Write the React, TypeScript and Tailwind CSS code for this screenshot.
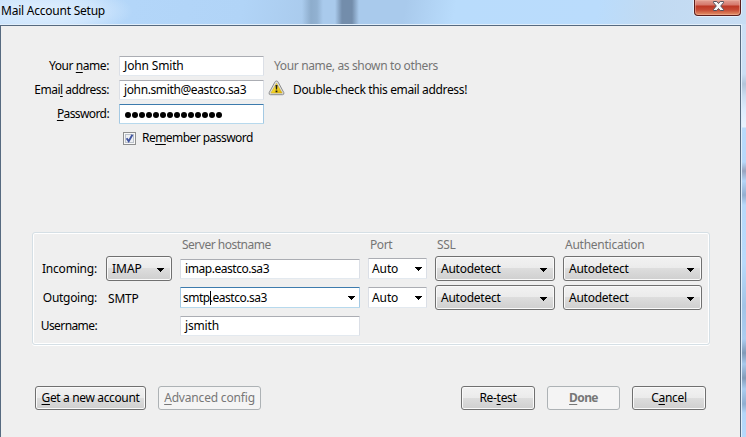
import type { ReactNode } from "react";

function Arrow({ className = "" }: { className?: string }) {
  return (
    <svg className={`shrink-0 ${className}`} width="7" height="4" viewBox="0 0 7 4" shapeRendering="crispEdges">
      <path d="M0 0h7v1H0zM1 1h5v1H1zM2 2h3v1H2zM3 3h1v1H3z" fill="#000" />
    </svg>
  );
}

function Field({ focused = false, className = "", children }: { focused?: boolean; className?: string; children: ReactNode }) {
  const border = focused
    ? "border-t-[#3d7bad] border-x-[#a4c9e3] border-b-[#b7d9ed]"
    : "border-t-[#abadb3] border-x-[#dbdfe6] border-b-[#e3e9ef]";
  return <div className={`flex items-center rounded-[1px] border bg-white ${border} ${className}`}>{children}</div>;
}

function Button({ disabled = false, className = "", children }: { disabled?: boolean; className?: string; children: ReactNode }) {
  const look = disabled
    ? "border-[#adb2b5] bg-[#f4f4f4] text-[#777]"
    : "border-[#707070] bg-[linear-gradient(#f2f2f2_0%,#ebebeb_48%,#dddddd_50%,#cfcfcf_100%)] text-black shadow-[inset_0_0_0_1px_#fafafa]";
  return <div className={`flex items-center rounded-[3px] border ${look} ${className}`}>{children}</div>;
}

function Select({ children }: { children: ReactNode }) {
  return (
    <Button className="h-[25px] justify-between pr-[7px] pl-[5px]">
      {children}
      <Arrow className="mt-[3px]" />
    </Button>
  );
}

function PortBox({ className = "" }: { className?: string }) {
  return (
    <Field className={`h-[21px] justify-between pr-[4px] pl-[3px] ${className}`}>
      <span className="tracking-[-0.1px]">Auto</span>
      <Arrow className="mt-px" />
    </Field>
  );
}

const Key = ({ children }: { children: ReactNode }) => (
  <span className="underline decoration-1 underline-offset-2">{children}</span>
);

function Warning() {
  return (
    <svg className="shrink-0" width="17" height="16" viewBox="0 0 17 16">
      <defs>
        <linearGradient id="warn" x1="0" y1="0" x2="1" y2="1">
          <stop offset="0" stopColor="#fff27a" />
          <stop offset=".55" stopColor="#f2d21f" />
          <stop offset="1" stopColor="#d9a900" />
        </linearGradient>
      </defs>
      <path d="M8.500 1Q9.600 1 10.200 2.200L15.800 12.600Q16.400 14.600 14.600 14.700H2.400Q.6 14.600 1.200 12.600L6.800 2.200Q7.400 1 8.500 1Z" fill="#dedede" stroke="#8c8c8c" />
      <path d="M8.500 3.300L14.200 13.100H2.800Z" fill="url(#warn)" stroke="#c8a92a" strokeWidth=".5" />
      <path d="M7.500 5h2l-.4 4.600H7.900zM7.600 10.600h1.800v1.700H7.600z" fill="#1c1c1c" />
    </svg>
  );
}

export default function App() {
  return (
    <div className="flex h-[437px] w-[746px] flex-col overflow-hidden bg-[#efefef] font-['Noto_Sans',sans-serif] text-[12px] leading-4 whitespace-nowrap text-black">
      <header className="flex h-6 shrink-0 justify-between bg-[radial-gradient(ellipse_85px_24px_at_48px_11px,#e4f2ffdd_0%,#e0efff88_60%,transparent_100%),linear-gradient(90deg,transparent_302px,#86a5c4cc_311px,#86a5c4aa_317px,transparent_323px,transparent_335px,#738dab_342px,#738dab_352px,transparent_359px),linear-gradient(100deg,#c4e0fb_0px,#b3d6f9_130px,#b1d4f7_240px,#a9caec_310px,#a9caec_400px,#b9dcfc_450px,#badcfc_590px,#c1daf2_640px,#c8ddf3_746px)]">
        <h1 className="pt-[3px] pl-[1px] tracking-[-0.23px]">Mail Account Setup</h1>
        <div className="mr-[5px] flex h-4 w-[47px] justify-center rounded-b-[4px] border border-t-0 border-[#5a1d1c] bg-[linear-gradient(#e2a094_0px,#d5776a_5px,#bc3724_6px,#c74b35_10px,#e39469_15px)] pt-[1px] pl-[2px] shadow-[inset_0_0_0_1px_#f1b5a580,0_0_0_1px_#e4effa]">
          <svg width="13" height="11" viewBox="0 0 13 11">
            <path d="M1.500 .5H4.800L6.500 2.500 8.200 .5h3.300v1.200L8.700 5l2.800 3.300v1.200H8.200L6.500 7.500 4.800 9.500H1.500v-1.200L4.300 5 1.500 1.700Z" fill="#f6f6f6" stroke="#56525c" strokeLinejoin="round" />
          </svg>
        </div>
      </header>
      <div className="flex flex-1 bg-[linear-gradient(#cde0f5_0px,#cbdff4_50px,#b2c5da_60px,#cbddf0_72px,#dcecfd_86px,#e9f3fe_103px,#b9dbfc_104px,#b7d8f9_138px,#98a4bf_147px,#b4d5f7_157px,#93afd0_171px,#b7d9fa_181px,#b8dafb_240px,#a2c4e6_282px,#abcdf0_315px,#809ab7_329px,#a7c9ec_340px,#829cb9_354px,#aacdf0_365px,#8faed0_380px,#b3d6f8_389px,#b6d9fb_413px)]">
        <main className="flex w-[742px] flex-col border-t border-r border-[#e2effb]">
          <div className="flex flex-1 flex-col border-x border-t border-[#566a80] bg-[#efefef]">
            <section className="mt-[30px] grid grid-cols-[108px_145px_1fr] grid-rows-[repeat(4,20px)] items-center gap-x-[10px] gap-y-1">
              <div className="text-right tracking-[-0.43px]">Your <Key>n</Key>ame:</div>
              <Field className="h-5 pl-[4px] tracking-[-0.15px]">John Smith</Field>
              <div className="tracking-[-0.36px] text-[#757575]">Your name, as shown to others</div>

              <div className="text-right tracking-[-0.5px]">Emai<Key>l</Key> address:</div>
              <Field className="h-5 pl-[4px] tracking-[-0.38px]">john.smith@eastco.sa3</Field>
              <div className="-ml-[6px] flex items-center gap-[8px] tracking-[-0.35px]">
                <div className="-mt-[5px]"><Warning /></div>
                Double-check this email address!
              </div>

              <div className="text-right tracking-[-0.6px]"><Key>P</Key>assword:</div>
              <Field focused className="h-5 gap-[1px] pl-[5px]">
                {Array.from({ length: 14 }, (_, i) => (
                  <span key={i} className="mt-[2px] size-[6px] rounded-full bg-black" />
                ))}
              </Field>
              <div />

              <div className="col-start-2 flex items-center gap-[6px] pl-[4px] tracking-[-0.55px]">
                <div className="flex size-[13px] shrink-0 items-center justify-center border border-[#8e8f8f] bg-[#eef0f3] shadow-[inset_0_0_0_1px_#f8f8f8,inset_0_0_0_2px_#bcc2cb]">
                  <svg width="11" height="11" viewBox="0 0 11 11">
                    <path d="M2.600 5.200L4.700 8.300L8.400 1.800" fill="none" stroke="#4155a0" strokeWidth="1.900" />
                  </svg>
                </div>
                <span>Re<Key>m</Key>ember password</span>
              </div>
            </section>

            <section className="mt-[84px] ml-[31px] h-[113px] w-[678px] rounded-[3px] border border-[#d5dfe5] shadow-[inset_0_0_0_1px_#fff,0_1px_0_#fff]">
              <div className="mt-[3px] grid grid-cols-[64px_66px_180px_59px_120px_139px] grid-rows-[16px_25px_25px_20px] items-start gap-x-2 gap-y-1 pl-px">
                <div className="col-start-3 pt-[1px] pl-[2px] tracking-[-0.5px] text-[#757575]">Server hostname</div>
                <div className="pt-[1px] pl-[2px] tracking-[-0.4px] text-[#757575]">Port</div>
                <div className="pt-[1px] pl-[2px] tracking-[-0.3px] text-[#757575]">SSL</div>
                <div className="pt-[1px] pl-[2px] tracking-[-0.25px] text-[#757575]">Authentication</div>

                <div className="pt-[5px] pr-px text-right tracking-[-0.2px]">Incoming:</div>
                <Select><span>IMAP</span></Select>
                <Field className="mt-[3px] h-5 pl-[4px] tracking-[-0.45px]">imap.eastco.sa3</Field>
                <PortBox className="mt-[2px]" />
                <Select><span className="tracking-[-0.25px]">Autodetect</span></Select>
                <Select><span className="tracking-[-0.25px]">Autodetect</span></Select>

                <div className="pt-[5px] pr-px text-right tracking-[-0.3px]">Outgoing:</div>
                <div className="pt-[6px] pl-[2px] tracking-[-0.2px]">SMTP</div>
                <Field focused className="mt-[2px] h-[21px] justify-between pr-[4px] pl-[2px] tracking-[-0.48px]">
                  <span>smtp<span className="-mr-px inline-block h-[14px] w-px bg-black align-[-3px]" />.eastco.sa3</span>
                  <Arrow className="mt-px" />
                </Field>
                <PortBox className="mt-[2px]" />
                <Select><span className="tracking-[-0.25px]">Autodetect</span></Select>
                <Select><span className="tracking-[-0.25px]">Autodetect</span></Select>

                <div className="pt-[4px] pr-px text-right tracking-[-0.6px]">Username:</div>
                <Field className="col-start-3 mt-[2px] h-5 pl-[4px] tracking-[-0.15px]">jsmith</Field>
              </div>
            </section>

            <footer className="mt-[41px] flex h-6 pl-[34px]">
              <Button className="w-[111px] justify-center tracking-[-0.36px]"><span><Key>G</Key>et a new account</span></Button>
              <Button disabled className="ml-3 w-[103px] justify-center tracking-[-0.18px]"><span><Key>A</Key>dvanced config</span></Button>
              <Button className="ml-[200px] w-[74px] justify-center tracking-[-0.3px]"><span>Re-<Key>t</Key>est</span></Button>
              <Button disabled className="ml-3 w-[73px] justify-center font-bold tracking-[-0.6px]"><span><Key>D</Key>one</span></Button>
              <Button className="ml-3 w-[74px] justify-center tracking-[-0.3px]"><span>C<Key>a</Key>ncel</span></Button>
            </footer>
          </div>
        </main>
      </div>
    </div>
  );
}
